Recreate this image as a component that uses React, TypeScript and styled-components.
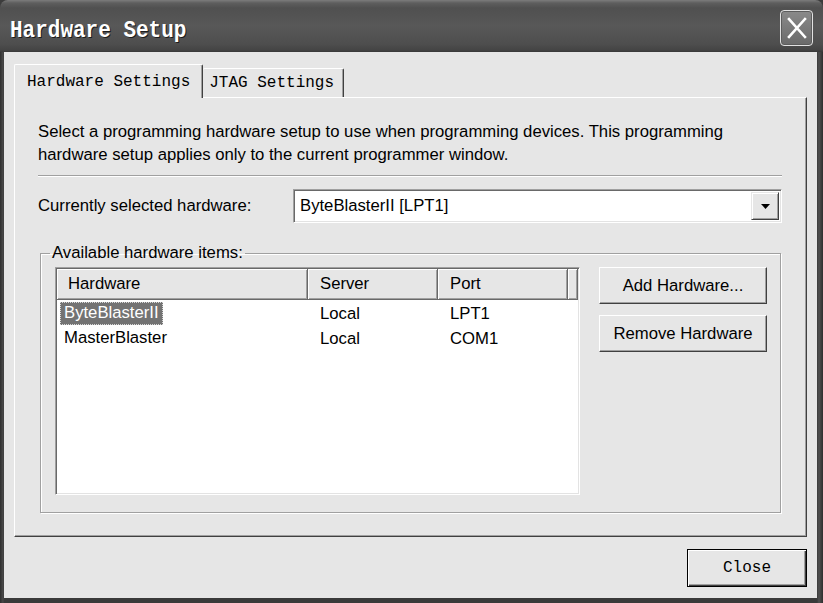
import React from 'react';
import styled, { createGlobalStyle } from 'styled-components';

const GlobalStyle = createGlobalStyle`
  html, body { margin: 0; padding: 0; background: #3c3c3c; }
  body { width: 823px; height: 603px; overflow: hidden; font-family: "Liberation Sans", Arial, sans-serif; }
  #root { width: 823px; height: 603px; }
  * { box-sizing: border-box; }
`;

const Window = styled.div`
  width: 823px;
  height: 603px;
  display: flex;
  flex-direction: column;
  background: linear-gradient(90deg, #2e2e2e 0, #4a4a4a 3px, #3a3a3a 4px, #3a3a3a 817px, #505050 819px, #2e2e2e 823px);
  border-radius: 8px 8px 0 0;
  overflow: hidden;
`;

const TitleBar = styled.div`
  height: 52px;
  flex: none;
  display: flex;
  align-items: center;
  justify-content: space-between;
  padding: 4px 10px 0 10px;
  background: linear-gradient(180deg, #7c7c7c 0, #5e5e5e 3px, #505050 8px, #585858 26px, #4e4e4e 44px, #444 50px, #383838 52px);
`;

const Title = styled.div`
  font-family: "Liberation Mono", "Courier New", monospace;
  font-weight: bold;
  font-size: 21px;
  color: #fff;
  text-shadow: 1px 1px 0 #1c1c1c;
  margin-top: 5px;
  transform: scaleY(1.12);
`;

const CloseX = styled.div`
  width: 33px;
  height: 36px;
  border: 1px solid #e2e2e2;
  border-radius: 4px;
  background: linear-gradient(180deg, #8a8a8a, #6a6a6a);
  display: flex;
  align-items: center;
  justify-content: center;
  box-shadow: inset 0 0 0 1px #5c5c5c;
`;

const Client = styled.div`
  flex: 1;
  margin: 0 6px 5px 4px;
  background: #e6e6e6;
  padding: 12px 10px 11px 10px;
  display: flex;
  flex-direction: column;
`;

const TabStrip = styled.div`
  display: flex;
  align-items: flex-end;
  height: 33px;
  flex: none;
  position: relative;
  z-index: 1;
`;

const Tab = styled.div<{ $active?: boolean }>`
  font-family: "Liberation Mono", "Courier New", monospace;
  font-size: 16px;
  color: #000;
  background: #e6e6e6;
  height: ${p => (p.$active ? '34px' : '29px')};
  margin-bottom: ${p => (p.$active ? '-1px' : '0')};
  padding: ${p => (p.$active ? '0 12px' : '0 9px 0 6px')};
  display: flex;
  align-items: center;
  border-top: 1px solid #fff;
  border-left: ${p => (p.$active ? '1px solid #fff' : '0')};
  border-right: 1px solid #404040;
  box-shadow: inset -1px 0 0 #a0a0a0;
  border-radius: 2px 2px 0 0;
`;

const Panel = styled.div`
  flex: 1;
  background: #e6e6e6;
  border-top: 1px solid #fff;
  border-left: 1px solid #fff;
  border-right: 1px solid #404040;
  border-bottom: 1px solid #404040;
  box-shadow: inset -1px -1px 0 #a0a0a0;
  padding: 22px 24px 23px 23px;
  display: flex;
  flex-direction: column;
`;

const Description = styled.p`
  margin: 0;
  font-size: 16.7px;
  line-height: 23px;
  color: #000;
`;

const Separator = styled.div`
  height: 2px;
  border-top: 1px solid #a0a0a0;
  border-bottom: 1px solid #fff;
  margin: 9px 0 12px;
`;

const FieldRow = styled.div`
  display: flex;
  align-items: center;
  height: 34px;
  flex: none;
`;

const FieldLabel = styled.label`
  width: 255px;
  flex: none;
  font-size: 16.7px;
  color: #000;
`;

const Combo = styled.div`
  flex: 1;
  height: 34px;
  background: #fff;
  border-top: 1px solid #a0a0a0;
  border-left: 1px solid #a0a0a0;
  border-right: 1px solid #fff;
  border-bottom: 1px solid #fff;
  box-shadow: inset 1px 1px 0 #696969, inset -1px -1px 0 #e3e3e3;
  padding: 2px 2px 2px 6px;
  display: flex;
  align-items: center;
  font-size: 16.7px;
  color: #000;
`;

const ComboText = styled.span`
  flex: 1;
`;

const DropButton = styled.div`
  width: 28px;
  height: 100%;
  background: #e6e6e6;
  border-top: 1px solid #e6e6e6;
  border-left: 1px solid #e6e6e6;
  border-right: 1px solid #404040;
  border-bottom: 1px solid #404040;
  box-shadow: inset 1px 1px 0 #fff, inset -1px -1px 0 #a0a0a0;
  display: flex;
  align-items: center;
  justify-content: center;
`;

const Group = styled.fieldset`
  flex: 1;
  margin: 20px 1px 0 2px;
  padding: 4px 13px 17px 14px;
  border: 1px solid #a0a0a0;
  box-shadow: 1px 1px 0 #fff, inset 1px 1px 0 #fff;
  display: flex;
  gap: 19px;
  min-width: 0;
`;

const Legend = styled.legend`
  font-size: 16.7px;
  line-height: 20px;
  padding: 0 2px;
  margin-left: -5px;
  color: #000;
`;

const ListView = styled.div`
  width: 525px;
  flex: none;
  background: #fff;
  border-top: 1px solid #a0a0a0;
  border-left: 1px solid #a0a0a0;
  border-right: 1px solid #fff;
  border-bottom: 1px solid #fff;
  box-shadow: inset 1px 1px 0 #696969, inset -1px -1px 0 #e3e3e3;
  padding: 1px;
  display: flex;
  flex-direction: column;
`;

const HeaderRow = styled.div`
  display: flex;
  height: 31px;
  flex: none;
`;

const HeaderCell = styled.div<{ $w: number; $pad: number }>`
  width: ${p => p.$w}px;
  flex: none;
  background: #e6e6e6;
  border-right: 1px solid #696969;
  border-bottom: 1px solid #696969;
  box-shadow: inset 1px 1px 0 #fff, inset -1px -1px 0 #a0a0a0;
  padding-left: ${p => p.$pad}px;
  display: flex;
  align-items: center;
  font-size: 16.7px;
  color: #000;
`;

const HeaderFill = styled(HeaderCell)`
  flex: 1;
  width: auto;
`;

const Row = styled.div`
  display: flex;
  height: 25px;
  align-items: center;
  &:first-of-type { margin-top: 1px; }
`;

const Cell = styled.div<{ $w: number; $pad: number }>`
  width: ${p => p.$w}px;
  flex: none;
  padding-left: ${p => p.$pad}px;
  font-size: 16.7px;
  color: #000;
  white-space: nowrap;
`;

const ItemText = styled.span<{ $selected?: boolean }>`
  display: inline-block;
  padding: 1px 4px 2px 4px;
  background: ${p => (p.$selected ? '#737373' : 'transparent')};
  color: ${p => (p.$selected ? '#fff' : '#000')};
  outline: ${p => (p.$selected ? '1px dotted #d8d8d8' : 'none')};
  outline-offset: -1px;
`;

const Rows = styled.div`
  display: flex;
  flex-direction: column;
`;

const SideButtons = styled.div`
  display: flex;
  flex-direction: column;
  gap: 11px;
  width: 168px;
  flex: none;
`;

const Button = styled.button`
  height: 37px;
  background: #e6e6e6;
  border-top: 1px solid #fff;
  border-left: 1px solid #fff;
  border-right: 1px solid #404040;
  border-bottom: 1px solid #404040;
  box-shadow: inset -1px -1px 0 #a0a0a0;
  font-family: "Liberation Sans", Arial, sans-serif;
  font-size: 16.7px;
  color: #000;
  padding: 0;
`;

const Footer = styled.div`
  display: flex;
  justify-content: flex-end;
  padding-top: 12px;
  flex: none;
`;

const DefaultButton = styled.button`
  width: 120px;
  height: 38px;
  background: #e6e6e6;
  border: 1px solid #000;
  box-shadow: inset 1px 1px 0 #fff, inset -1px -1px 0 #404040, inset -2px -2px 0 #a0a0a0;
  font-family: "Liberation Mono", "Courier New", monospace;
  font-size: 16px;
  color: #000;
  padding: 0;
`;

const rows = [
  { hw: 'ByteBlasterII', server: 'Local', port: 'LPT1', selected: true },
  { hw: 'MasterBlaster', server: 'Local', port: 'COM1', selected: false },
];

export default function App() {
  return (
    <>
      <GlobalStyle />
      <Window>
        <TitleBar>
          <Title>Hardware Setup</Title>
          <CloseX>
            <svg width="22" height="24" viewBox="0 0 22 24">
              <path d="M3 3 L19 21 M19 3 L3 21" stroke="#fff" strokeWidth="2.6" strokeLinecap="square" fill="none" />
            </svg>
          </CloseX>
        </TitleBar>
        <Client>
          <TabStrip>
            <Tab $active>Hardware Settings</Tab>
            <Tab>JTAG Settings</Tab>
          </TabStrip>
          <Panel>
            <Description>
              Select a programming hardware setup to use when programming devices. This programming
              <br />
              hardware setup applies only to the current programmer window.
            </Description>
            <Separator />
            <FieldRow>
              <FieldLabel>Currently selected hardware:</FieldLabel>
              <Combo>
                <ComboText>ByteBlasterII [LPT1]</ComboText>
                <DropButton>
                  <svg width="9" height="5" viewBox="0 0 9 5">
                    <path d="M0 0 H9 L4.5 5 Z" fill="#000" />
                  </svg>
                </DropButton>
              </Combo>
            </FieldRow>
            <Group>
              <Legend>Available hardware items:</Legend>
              <ListView>
                <HeaderRow>
                  <HeaderCell $w={251} $pad={11}>Hardware</HeaderCell>
                  <HeaderCell $w={130} $pad={12}>Server</HeaderCell>
                  <HeaderCell $w={130} $pad={12}>Port</HeaderCell>
                  <HeaderFill $w={0} $pad={0} />
                </HeaderRow>
                <Rows>
                  {rows.map(r => (
                    <Row key={r.hw}>
                      <Cell $w={251} $pad={3}>
                        <ItemText $selected={r.selected}>{r.hw}</ItemText>
                      </Cell>
                      <Cell $w={130} $pad={12}>{r.server}</Cell>
                      <Cell $w={130} $pad={12}>{r.port}</Cell>
                    </Row>
                  ))}
                </Rows>
              </ListView>
              <SideButtons>
                <Button>Add Hardware...</Button>
                <Button>Remove Hardware</Button>
              </SideButtons>
            </Group>
          </Panel>
          <Footer>
            <DefaultButton>Close</DefaultButton>
          </Footer>
        </Client>
      </Window>
    </>
  );
}
